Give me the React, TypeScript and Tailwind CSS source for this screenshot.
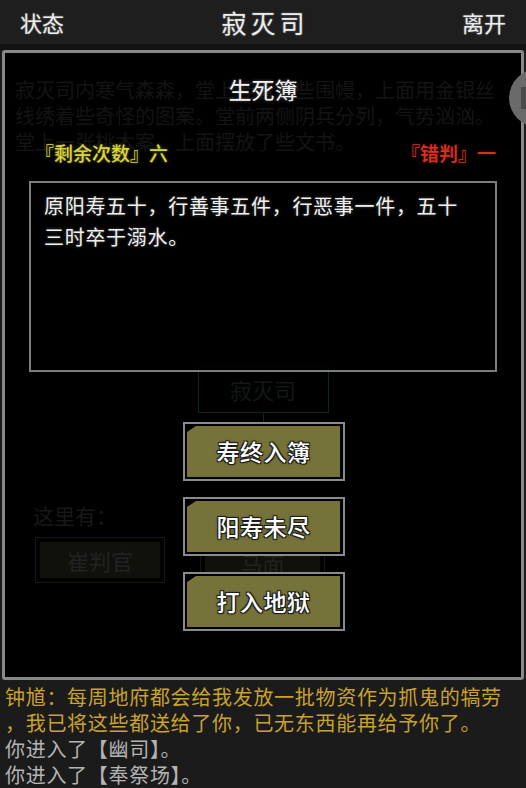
import React from "react";

const bgLines = [
  "寂灭司内寒气森森，堂上挂着一些围幔，上面用金银丝",
  "线绣着些奇怪的图案。堂前两侧阴兵分列，气势汹汹。",
  "堂上一张桃木案，上面摆放了些文书。",
];

const actions = ["寿终入簿", "阳寿未尽", "打入地狱"];

const logs = [
  { text: "钟馗：每周地府都会给我发放一批物资作为抓鬼的犒劳", tone: "gold" },
  { text: "，我已将这些都送给了你，已无东西能再给予你了。", tone: "gold" },
  { text: "你进入了【幽司】。", tone: "gray" },
  { text: "你进入了【奉祭场】。", tone: "gray" },
];

const Header = () => (
  <div className="h-[44px] bg-[#1e1e1e] grid grid-cols-3 items-center px-[20px] text-[#ececec] [text-shadow:0_0_2px_#777,0_0_1px_#555]">
    <span className="text-[22px] leading-none">状态</span>
    <span className="text-[25px] leading-none text-center tracking-[4px] pl-[4px]">寂灭司</span>
    <span className="text-[22px] leading-none text-right">离开</span>
  </div>
);

// the page behind the dialog, dimmed almost to black
const DimScene = () => (
  <div className="flex flex-col h-full">
    <div className="pl-[10px] pt-[24px] text-[20px] leading-[26px] text-[#141414] whitespace-nowrap">
      {bgLines.map((l, i) => (
        <div key={i}>{l}</div>
      ))}
    </div>
    <div className="flex flex-col items-center mt-[211px]">
      <div className="w-[131px] h-[47px] border border-[#0d2620] flex items-center justify-center text-[22px] text-[#111816]">
        寂灭司
      </div>
      <div className="w-px h-[20px] bg-[#0d2620]" />
    </div>
    <div className="pl-[28px] mt-[67px] text-[21px] leading-[30px] text-[#181818]">这里有：</div>
    <div className="pl-[30px] mt-[7px] flex gap-[35px]">
      <div className="w-[130px] h-[46px] border border-[#161616] p-[4px]">
        <div className="w-full h-full bg-[#0f110a] flex items-center justify-center text-[22px] text-[#222]">
          崔判官
        </div>
      </div>
      <div className="w-[125px] h-[46px] border border-[#161616] p-[4px] mt-[3px]">
        <div className="w-full h-full bg-[#0f110a] flex items-center justify-center text-[22px] text-[#222]">
          马面
        </div>
      </div>
    </div>
  </div>
);

const ActionButton = ({ label }: { label: string }) => (
  <div className="w-[162px] h-[59px] border-2 border-[#8a8a8a] bg-black p-[2px] pr-[3px]">
    <div className="w-full h-full bg-[#76733a] [clip-path:polygon(9px_0,100%_0,100%_100%,0_100%,0_6px)] flex items-center justify-center">
      <span className="text-[23px] font-medium text-white tracking-[0.5px] [text-shadow:1px_1px_0_#1c1c1c,-1px_-1px_0_#1c1c1c,1px_-1px_0_#1c1c1c,-1px_1px_0_#1c1c1c,0_0_3px_#111]">
        {label}
      </span>
    </div>
  </div>
);

const Dialog = () => (
  <div className="absolute inset-0 flex flex-col">
    <div className="pt-[23px] text-center text-[23px] leading-[26px] text-[#f2f2f2] [text-shadow:0_0_3px_rgba(255,255,255,0.35)]">
      生死簿
    </div>
    <div className="mt-[40px] pl-[30px] pr-[25px] flex justify-between text-[19px] leading-[22px] font-medium">
      <span className="text-[#d9d43c] [text-shadow:0_0_3px_rgba(217,212,60,0.5)]">『剩余次数』六</span>
      <span className="text-[#d8321f] [text-shadow:0_0_3px_rgba(216,50,31,0.5)]">『错判』一</span>
    </div>
    <div className="mt-[17px] mx-[24px] h-[191px] border-2 border-[#7c7c7c] bg-black/85 pt-[7px] pl-[13px] pr-[8px] text-[20px] leading-[31px] tracking-[0.7px] text-[#f0f0f0] [text-shadow:0_0_3px_rgba(255,255,255,0.35)]">
      <div>原阳寿五十，行善事五件，行恶事一件，五十</div>
      <div>三时卒于溺水。</div>
    </div>
    <div className="mt-[50px] flex flex-col items-center gap-[16px] pl-[2px]">
      {actions.map((a) => (
        <ActionButton key={a} label={a} />
      ))}
    </div>
  </div>
);

export default function App() {
  return (
    <div className="relative w-[526px] h-[788px] overflow-hidden bg-[#1b1b1b] font-['Noto_Sans_CJK_SC',sans-serif]">
      <Header />
      <div className="h-[6px] bg-[#121212]" />
      <div className="relative mx-[2px] h-[630px] border-[3px] border-[#888] rounded-[3px] bg-black overflow-hidden">
        <DimScene />
        <Dialog />
      </div>
      <div className="pl-[5px] pt-[4px] text-[20px] leading-[26px] tracking-[0.7px]">
        {logs.map((l, i) => (
          <div key={i} className={l.tone === "gold" ? "text-[#c9a22b]" : "text-[#b4b4b4]"}>
            {l.text}
          </div>
        ))}
      </div>
      {/* floating side button */}
      <div className="absolute left-[509px] top-[69px] w-[58px] h-[58px] rounded-full bg-[#6a6a6a]">
        <div className="absolute left-[12px] top-[18px] w-[10px] h-[22px] bg-[#4a4a4a]" />
      </div>
    </div>
  );
}
